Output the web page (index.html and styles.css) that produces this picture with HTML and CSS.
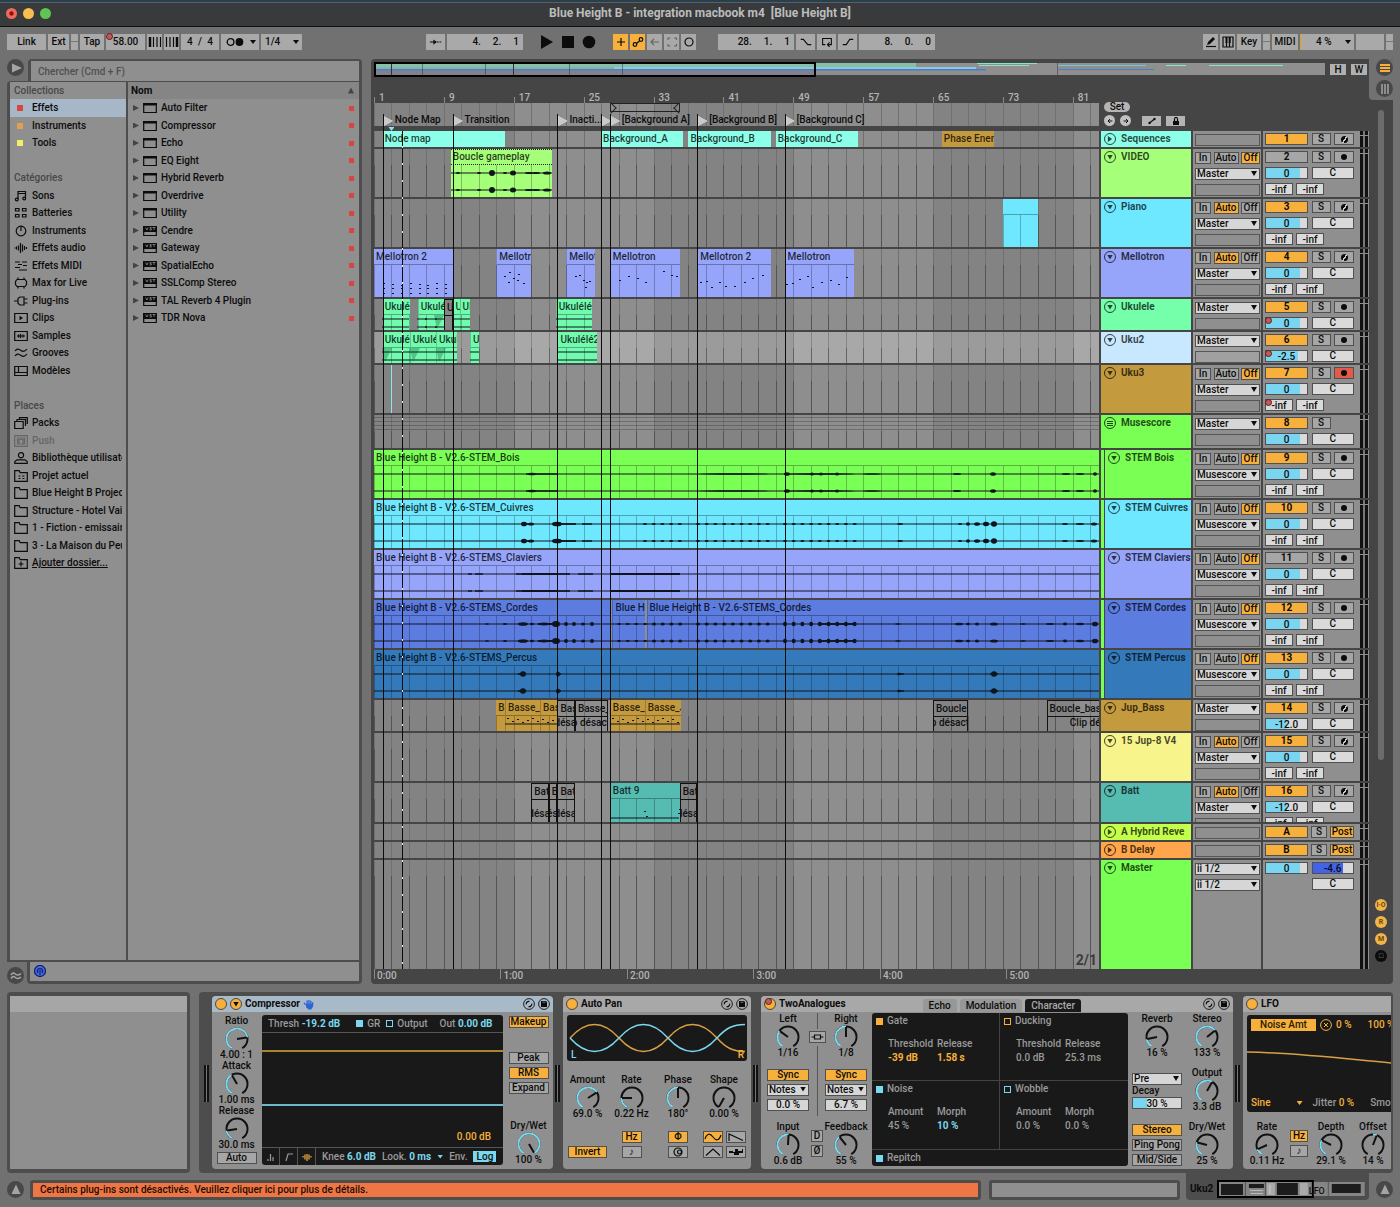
FILE: index.html
```html
<!DOCTYPE html>
<html lang="fr">
<head>
<meta charset="utf-8">
<title>Blue Height B - integration macbook m4</title>
<link rel="stylesheet" href="styles.css">
</head>
<body>
<svg class="defs" aria-hidden="true">
  <defs>
    <symbol id="i-notes" viewBox="0 0 14 12"><path d="M4 9V1.500h7.500V8M4 3.500h7.500"/><circle cx="2.800" cy="9.500" r="1.400"/><circle cx="10.200" cy="8.500" r="1.400"/></symbol>
    <symbol id="i-drums" viewBox="0 0 14 12"><path d="M1.500 1.500h3.500v2.500H1.500zM8.500 1.500H12v2.500H8.500zM1.500 7.500h3.500V10H1.500zM8.500 7.500H12V10H8.500z"/></symbol>
    <symbol id="i-dial" viewBox="0 0 14 12"><circle cx="7" cy="6" r="4.800"/><path d="M7 1v5"/></symbol>
    <symbol id="i-audio" viewBox="0 0 14 12"><path d="M.5 6h1M2.500 4.500v3M4.500 3.500v5M6.500 1v10M8.500 2.500v7M10.500 4v4M12.500 5v2"/></symbol>
    <symbol id="i-midi" viewBox="0 0 14 12"><path d="M1 2h5M8 2h5M4 4.500h4M1 7.500h5M5 10h8M9 5.500h4"/></symbol>
    <symbol id="i-max" viewBox="0 0 14 12"><path d="M3 2.500h8l1.500 2v3L11 9.500H3L1.500 7.500v-3zM4 .5v2M10 .5v2M4 9.500v2M10 9.500v2"/></symbol>
    <symbol id="i-plug" viewBox="0 0 14 12"><path d="M0 6h4M4 3.500 6 2h4v8H6L4 8.500zM10 4h3.500M10 8h3.500"/></symbol>
    <symbol id="i-clip" viewBox="0 0 14 12"><path d="M.7 1.500h12.600v9H.7z"/><path class="fill" d="M5.500 3.800 9 6 5.500 8.200z"/></symbol>
    <symbol id="i-sample" viewBox="0 0 14 12"><path d="M.7 1.500h12.600v9H.7zM3 6h8M4.500 4.500v3M6.500 4v4M9 4.500v3"/></symbol>
    <symbol id="i-groove" viewBox="0 0 14 12"><path d="M1 4c2-3 4-2 6-.5S11 4.500 13 2M1 9c2-3 4-2 6-.5S11 9.500 13 7"/></symbol>
    <symbol id="i-template" viewBox="0 0 14 12"><path d="M.7 1.500h12.600v9H.7zM.7 7.500h12.600M4.500 1.500v6"/></symbol>
    <symbol id="i-packs" viewBox="0 0 14 12"><path d="M.7 4.500h8.500v7H.7zM3 4V2.500h8.500V9M5.500 2V.600H13.300V7"/></symbol>
    <symbol id="i-push" viewBox="0 0 14 12"><path d="M.7.700h12.600v10.600H.7zM3.500 3h7v6h-7zM5 4.500h4V9H5z"/></symbol>
    <symbol id="i-user" viewBox="0 0 14 12"><circle cx="7" cy="3.200" r="2.600"/><path d="M.8 11.300V9.500L3 7.800h8l2.200 1.700v1.800z"/></symbol>
    <symbol id="i-folder" viewBox="0 0 14 12"><path d="M.7 11.300V.700h4.500l1 2h7.100v8.600z"/></symbol>
    <symbol id="i-project" viewBox="0 0 14 12"><path d="M.7 11.300V.700h4.500l1 2h7.100v8.600zM4.500 6h2M8 6h2.500M4.500 8.500h2M8.500 8.500h2"/></symbol>
    <symbol id="i-addfolder" viewBox="0 0 14 12"><path d="M.7 11.300V.700h4.500l1 2h7.100v8.600zM7 4.500v5M4.500 7h5"/></symbol>
    <symbol id="i-device" viewBox="0 0 14 12"><path d="M.7 1.500h12.600v9H.7z"/><path class="fill" d="M0 1h14v2.500H0z"/></symbol>
    <symbol id="i-vst" viewBox="0 0 14 12"><path d="M.7 1.500h12.600v9H.7z"/><path class="fill" d="M0 1h14v6H0z"/><path class="cut" d="M2.500 2.500 4 5l1-2.500M8.500 2.500H7v1.200h1.300V5H6.500M9.500 2.500h3M11 2.500V5"/></symbol>
    <symbol id="i-swap" viewBox="0 0 12 12"><circle class="disc" cx="6" cy="6" r="5.400"/><path d="M3.300 6.300C3 4.500 4.500 3 6.500 3.400M8.700 5.700C9 7.500 7.500 9 5.500 8.600"/></symbol>
    <symbol id="i-save" viewBox="0 0 12 12"><circle class="disc" cx="6" cy="6" r="5.400"/><path class="fill" d="M3 3h5l1 1v5H3z"/><path class="cut" d="M4.500 4.200h3"/></symbol>
    <symbol id="i-sine" viewBox="0 0 18 10"><path d="M1 7C3 1 6 1 9 5s6 4 8-2"/></symbol>
    <symbol id="i-saw" viewBox="0 0 18 10"><path d="M2 9V2l14 6.500"/></symbol>
    <symbol id="i-tri" viewBox="0 0 18 10"><path d="M2 8.500 9 2l7 6.500"/></symbol>
    <symbol id="i-rand" viewBox="0 0 18 10"><path class="fill" d="M2 4h4v1h2V2h3v2h4V2h1v4h-4v2H7V6H2z"/></symbol>
  </defs>
</svg>

<header class="titlebar">
  <div class="lights"><i class="light red"></i><i class="light yellow"></i><i class="light green"></i></div>
  <h1>Blue Height B - integration macbook m4 &nbsp;[Blue Height B]</h1>
</header>

<div class="toolbar">
  <div class="group">
    <button class="tb w40">Link</button>
    <button class="tb w22">Ext</button>
    <span class="tb led"></span>
    <button class="tb w24">Tap</button>
    <label class="tb w40 automated"><input aria-label="Tempo" value="58.00"></label>
    <button class="tb w16" aria-label="Ralentir"><svg viewBox="0 0 14 10"><path class="heavy" d="M2 0v10"/><path d="M5.500 0v10M9 0v10M12.500 0v10"/></svg></button>
    <button class="tb w16" aria-label="Accélérer"><svg viewBox="0 0 14 10"><path d="M1.500 0v10M5 0v10M8.500 0v10"/><path class="heavy" d="M12 0v10"/></svg></button>
    <button class="tb w38 spread"><span>4</span><span>/</span><span>4</span></button>
    <button class="tb w38 drop" aria-label="Métronome"><svg class="metro" viewBox="0 0 18 10"><circle cx="5" cy="5" r="3"/><circle class="fill" cx="13" cy="5" r="3.500"/></svg></button>
    <button class="tb w42 drop">1/4</button>
  </div>
  <div class="group center">
    <button class="tb w20" aria-label="Suivre"><svg viewBox="0 0 16 10"><path d="M1 5h5M9 5h2M12 5h2"/><path class="fill" d="M5 2l4 3-4 3z"/></svg></button>
    <button class="tb w76 position"><span>4.</span><span>2.</span><span>1</span></button>
    <span class="transport">
      <button aria-label="Lecture"><svg viewBox="0 0 14 14"><path class="fill" d="M1 0l12 7-12 7z"/></svg></button>
      <button aria-label="Stop"><svg viewBox="0 0 14 14"><path class="fill" d="M1 1h12v12H1z"/></svg></button>
      <button aria-label="Enregistrer"><svg viewBox="0 0 14 14"><circle class="fill" cx="7" cy="7" r="6.300"/></svg></button>
    </span>
    <button class="tb w16 on" aria-label="Overdub"><svg viewBox="0 0 14 12"><path d="M7 2v8M3 6h8"/></svg></button>
    <button class="tb w16 on" aria-label="Automation"><svg viewBox="0 0 14 12"><circle cx="4" cy="8.500" r="1.800"/><circle cx="10" cy="3.500" r="1.800"/><path d="M5.500 7.500 8.500 5"/></svg></button>
    <button class="tb w16 dim" aria-label="Réactiver l'automation"><svg viewBox="0 0 14 12"><path d="M3 6h8M6 3 3 6l3 3"/></svg></button>
    <button class="tb w16 dim" aria-label="Capture"><svg viewBox="0 0 14 12"><path d="M3 4V2h2.500M9 2h2.500v2M3 8v2h2.500M9 10h2.500V8"/></svg></button>
    <button class="tb w16" aria-label="Session"><svg viewBox="0 0 14 12"><circle cx="7" cy="6" r="4"/></svg></button>
    <button class="tb w76 position after"><span>28.</span><span>1.</span><span>1</span></button>
    <button class="tb w20" aria-label="Punch in"><svg viewBox="0 0 16 10"><path d="M2 2h3l5 6h4"/></svg></button>
    <button class="tb w20" aria-label="Boucle"><svg viewBox="0 0 16 12"><path d="M6 9H3V2h10v7H9M11 6.500 8.500 9l2.500 2.500"/></svg></button>
    <button class="tb w20" aria-label="Punch out"><svg viewBox="0 0 16 10"><path d="M2 8h4l4-6h4"/></svg></button>
    <button class="tb w76 position"><span>8.</span><span>0.</span><span>0</span></button>
  </div>
  <div class="group end-group">
    <button class="tb w16" aria-label="Dessin"><svg viewBox="0 0 14 12"><path d="M2 10.500h10"/><path class="fill" d="M3 9l1-3 5-5 2 2-5 5z"/></svg></button>
    <button class="tb w16" aria-label="Clavier MIDI"><svg viewBox="0 0 14 12"><path d="M2 1h10v10H2zM5.500 6v5M8.500 6v5"/><path class="fill" d="M4.500 1h2v6h-2zM7.700 1h2v6h-2z"/></svg></button>
    <button class="tb w24">Key</button>
    <span class="tb led"></span>
    <button class="tb w26">MIDI</button>
    <button class="tb w54 drop cpu">4 %</button>
    <span class="tb w28"></span>
    <span class="tb led"></span>
  </div>
</div>

<main class="workspace">
  <section class="browser">
    <div class="b-top">
      <button class="round" aria-label="Pré-écoute"><svg viewBox="0 0 16 16"><path d="M4 3.500l10 4.500-10 4.500z"/></svg></button>
      <div class="b-search"><input type="search" aria-label="Chercher" placeholder="Chercher (Cmd + F)"></div>
    </div>
    <div class="b-body">
      <nav>
        <ul class="rows side">
          <li class="head">Collections</li>
          <li class="current"><i class="tag t-red"></i>Effets</li>
          <li><i class="tag t-orange"></i>Instruments</li>
          <li><i class="tag t-yellow"></i>Tools</li>
          <li></li>
          <li class="head">Catégories</li>
          <li><svg><use href="#i-notes"/></svg>Sons</li>
          <li><svg><use href="#i-drums"/></svg>Batteries</li>
          <li><svg><use href="#i-dial"/></svg>Instruments</li>
          <li><svg><use href="#i-audio"/></svg>Effets audio</li>
          <li><svg><use href="#i-midi"/></svg>Effets MIDI</li>
          <li><svg><use href="#i-max"/></svg>Max for Live</li>
          <li><svg><use href="#i-plug"/></svg>Plug-ins</li>
          <li><svg><use href="#i-clip"/></svg>Clips</li>
          <li><svg><use href="#i-sample"/></svg>Samples</li>
          <li><svg><use href="#i-groove"/></svg>Grooves</li>
          <li><svg><use href="#i-template"/></svg>Modèles</li>
          <li></li>
          <li class="head">Places</li>
          <li><svg><use href="#i-packs"/></svg>Packs</li>
          <li class="off"><svg><use href="#i-push"/></svg>Push</li>
          <li><svg><use href="#i-user"/></svg><span>Bibliothèque utilisateur</span></li>
          <li><svg><use href="#i-project"/></svg>Projet actuel</li>
          <li><svg><use href="#i-folder"/></svg><span>Blue Height B Project</span></li>
          <li><svg><use href="#i-folder"/></svg><span>Structure - Hotel Vai</span></li>
          <li><svg><use href="#i-folder"/></svg><span>1 - Fiction - emissaire</span></li>
          <li><svg><use href="#i-folder"/></svg><span>3 - La Maison du Peup</span></li>
          <li><svg><use href="#i-addfolder"/></svg><a href="#">Ajouter dossier...</a></li>
        </ul>
      </nav>
      <ul class="rows files">
        <li class="colhead">Nom<i></i></li>
        <li><svg><use href="#i-device"/></svg>Auto Filter</li>
        <li><svg><use href="#i-device"/></svg>Compressor</li>
        <li><svg><use href="#i-device"/></svg>Echo</li>
        <li><svg><use href="#i-device"/></svg>EQ Eight</li>
        <li><svg><use href="#i-device"/></svg>Hybrid Reverb</li>
        <li><svg><use href="#i-device"/></svg>Overdrive</li>
        <li><svg><use href="#i-device"/></svg>Utility</li>
        <li><svg><use href="#i-vst"/></svg>Cendre</li>
        <li><svg><use href="#i-vst"/></svg>Gateway</li>
        <li><svg><use href="#i-vst"/></svg>SpatialEcho</li>
        <li><svg><use href="#i-vst"/></svg>SSLComp Stereo</li>
        <li><svg><use href="#i-vst"/></svg>TAL Reverb 4 Plugin</li>
        <li><svg><use href="#i-vst"/></svg>TDR Nova</li>
      </ul>
    </div>
    <div class="b-bottom">
      <button class="round" aria-label="Groove Pool"><svg viewBox="0 0 16 16"><path class="line" d="M3 7c2-3 3-2 5-.5S11 7 13 5.500M3 10.500c2-3 3-2 5-.5s3 .5 5-1"/></svg></button>
      <div class="b-foot"><div><button class="phones" aria-label="Casque"><svg viewBox="0 0 12 12"><circle cx="6" cy="6" r="5.500"/><path d="M3.500 8V6a2.500 2.500 0 0 1 5 0v2M6 5v5"/></svg></button></div></div>
    </div>
  </section>

  <section class="arrangement">
    <div class="arr-main">
      <div class="overview">
        <div class="mini">
          <svg viewBox="0 0 951 12" preserveAspectRatio="none">
            <path fill="#86c0a8" d="M2 0h540v5H2z"/><path fill="#87b3a8" d="M2 4h600v3H2z"/><path fill="#8fc8d8" d="M240 4h362v2H240z"/>
            <path fill="#4a7fc8" d="M2 6h610v1.500H2z"/><path fill="#84808e" d="M2 8h440v4H2z"/>
            <path fill="#83e6c4" d="M603 0h60v1h-60zM605 2h50v1h-50zM835 2h74v1h-74zM792 2h20v1h-20z"/>
            <path fill="#70c8d8" d="M684 2h88v1h-88z"/><path fill="#4a7fc8" d="M684 6h96v1h-96z"/>
            <path fill="#333" d="M17 0h1v12h-1zM48 0h.5v12H48zM111 0h.5v12h-.5zM139 0h1v12h-1zM195 0h.5v12h-.5zM248 0h.5v12h-.5zM683 0h.5v12h-.5z"/>
          </svg>
          <i class="window"></i>
        </div>
        <button>H</button><button>W</button>
      </div>
      <div class="ruler" id="ruler"></div>
      <div class="arr-body">
        <div class="markers">
          <div class="scrub lane-bg" id="locators"><i class="loop"></i></div>
          <div class="set">
            <button class="pill">Set</button>
            <span class="nav-row">
              <button class="dot-btn" aria-label="Précédent"><svg viewBox="0 0 10 10"><path d="M8 5H3M5 2.500 2.500 5 5 7.500"/></svg></button>
              <button class="dot-btn" aria-label="Suivant"><svg viewBox="0 0 10 10"><path d="M2 5h5M5 2.500 7.500 5 5 7.500"/></svg></button>
              <button class="flat" aria-label="Mode automation"><svg viewBox="0 0 10 8"><path d="M2.500 6l5-4"/><circle class="fill" cx="2.500" cy="6" r="1.200"/><circle class="fill" cx="7.500" cy="2" r="1.200"/></svg></button>
              <button class="flat" aria-label="Verrouiller les enveloppes"><svg viewBox="0 0 10 8"><path class="fill" d="M2 4h6v4H2z"/><path d="M3.500 4V2a1.500 1.500 0 0 1 3 0v2"/></svg></button>
            </span>
          </div>
        </div>
        <div class="tracks" id="tracks"></div>
        <div class="overlay" id="overlay"></div>
      </div>
      <div class="times" id="times"></div>
    </div>
    <aside class="arr-side">
      <div class="views">
        <button class="round" aria-label="Arrangement"><svg viewBox="0 0 16 16"><path class="amber" d="M3 5h10M3 8h10M3 11h10"/></svg></button>
        <button class="round" aria-label="Session"><svg viewBox="0 0 16 16"><path class="line" d="M5 3v10M8 3v10M11 3v10"/></svg></button>
      </div>
      <i class="scrollbar"></i>
      <div class="toggles"><button>I·O</button><button>R</button><button>M</button><button class="black">□</button></div>
    </aside>
  </section>
</main>

<section class="detail">
  <div class="info"><div></div></div>
  <div class="devices">
    <i class="vu"></i>
    <article class="device compressor">
      <header><i class="power"></i><i class="power fold-arrow"></i><h2>Compressor</h2><svg class="hand" viewBox="0 0 12 12"><path d="M3 6 1 4.500M4.500 6V1.500M6.500 6V1M8.500 6V2M10.500 7V3.500"/><path class="body" d="M3 5.500h8V8l-2 3.500H6L3.500 9z"/></svg><span class="tools"><svg><use href="#i-swap"/></svg><svg><use href="#i-save"/></svg></span></header>
      <div class="body">
        <div class="col">
          <div class="knob" data-v="0.77" data-name="Ratio">4.00 : 1</div>
          <div class="knob" data-v="0.4" data-name="Attack">1.00 ms</div>
          <div class="knob" data-v="0.17" data-name="Release">30.0 ms</div>
          <button class="btn push-down">Auto</button>
        </div>
        <div class="screen comp-screen">
          <div class="line-row"><span>Thresh <b>-19.2 dB</b></span><label><input type="checkbox" checked>GR</label><label><input type="checkbox">Output</label><span>Out <b>0.00 dB</b></span></div>
          <div class="graph"><i class="orange-line"></i><i class="cyan-line"></i><span>0.00 dB</span></div>
          <div class="foot-row">
            <button aria-label="Activité"><svg viewBox="0 0 12 12"><path d="M3 10V8M5.500 10V3M8 10V6"/></svg></button>
            <button aria-label="Transfert"><svg viewBox="0 0 12 12"><path d="M3 10 5 3h5"/></svg></button>
            <button aria-label="Réduction" class="amber"><svg viewBox="0 0 12 12"><path d="M2 5v1.500M4 3.500v5M6 3v7M8 3.500v5M10 5v1.500"/></svg></button>
            <span>Knee <b>6.0 dB</b></span><span>Look. <b>0 ms</b></span><i class="tri"></i><span>Env.</span><button class="log">Log</button>
          </div>
        </div>
        <div class="col right">
          <button class="btn on">Makeup</button>
          <div class="stack"><button class="btn">Peak</button><button class="btn on">RMS</button><button class="btn">Expand</button></div>
          <div class="knob" data-v="1" data-name="Dry/Wet">100 %</div>
        </div>
      </div>
    </article>
    <i class="vu"></i>
    <article class="device autopan">
      <header><i class="power"></i><h2>Auto Pan</h2><span class="tools"><svg><use href="#i-swap"/></svg><svg><use href="#i-save"/></svg></span></header>
      <div class="body">
        <div class="screen pan-screen">
          <svg viewBox="0 0 180 46" preserveAspectRatio="none"><path class="o" d="M3 23C12 13 19 9.500 27.500 9.500S43 13 52 23C61 33 68 36.500 76.500 36.500S92 33 101 23C110 13 117 9.500 125.500 9.500S141 13 150 23C159 33 166 36.500 178 36.500"/><path class="c" d="M3 23C12 33 19 36.500 27.500 36.500S43 33 52 23C61 13 68 9.500 76.500 9.500S92 13 101 23C110 33 117 36.500 125.500 36.500S141 33 150 23C159 13 166 9.500 178 9.500"/></svg>
          <span>L</span><span>R</span>
        </div>
        <div class="four">
          <div class="knob" data-v="0.69" data-name="Amount">69.0 %</div>
          <div class="knob" data-v="0.2" data-name="Rate">0.22 Hz</div>
          <div class="knob" data-v="0.5" data-name="Phase">180°</div>
          <div class="knob" data-v="0" data-name="Shape">0.00 %</div>
        </div>
        <div class="four modes">
          <div class="stack end"><button class="btn on wide">Invert</button></div>
          <div class="stack"><button class="btn on sm">Hz</button><button class="btn sm">♪</button></div>
          <div class="stack"><button class="btn on sm">Φ</button><button class="btn sm" aria-label="Spin"><svg viewBox="0 0 18 10"><circle cx="9" cy="5" r="4"/><circle cx="10.500" cy="5" r="2"/></svg></button></div>
          <div class="waves"><button class="btn on" aria-label="Sinus"><svg><use href="#i-sine"/></svg></button><button class="btn" aria-label="Dent de scie"><svg><use href="#i-saw"/></svg></button><button class="btn" aria-label="Triangle"><svg><use href="#i-tri"/></svg></button><button class="btn" aria-label="Aléatoire"><svg><use href="#i-rand"/></svg></button></div>
        </div>
      </div>
    </article>
    <i class="vu"></i>
    <article class="device echo">
      <header><i class="power automated"></i><h2>TwoAnalogues</h2><div class="tabs"><button>Echo</button><button>Modulation</button><button class="active">Character</button></div><span class="tools"><svg><use href="#i-swap"/></svg><svg><use href="#i-save"/></svg></span></header>
      <div class="body">
        <div class="delay">
          <div class="side-col">
            <div class="knob" data-v="0.32" data-name="Left">1/16</div>
            <div class="stack"><button class="btn on">Sync</button><label class="sel"><select aria-label="Mode gauche"><option>Notes</option></select></label><input class="val" aria-label="Décalage gauche" value="0.0 %"></div>
            <div class="knob" data-v="0.51" data-name="Input">0.6 dB</div>
          </div>
          <div class="mid-col"><i class="rule"></i><button class="btn" aria-label="Lier"><svg viewBox="0 0 14 10"><path d="M1 5h3M10 5h3M4 3h6v4H4z"/></svg></button><i class="rule long"></i><button class="btn">D</button><button class="btn">Ø</button></div>
          <div class="side-col">
            <div class="knob" data-v="0.5" data-name="Right">1/8</div>
            <div class="stack"><button class="btn on">Sync</button><label class="sel"><select aria-label="Mode droite"><option>Notes</option></select></label><input class="val" aria-label="Décalage droite" value="6.7 %"></div>
            <div class="knob" data-v="0.37" data-name="Feedback">55 %</div>
          </div>
        </div>
        <div class="screen char-screen">
          <section><label class="o"><input type="checkbox" checked>Gate</label><dl class="o"><dt>Threshold</dt><dt>Release</dt><dd class="hi">-39 dB</dd><dd class="hi">1.58 s</dd></dl></section>
          <section><label class="o"><input type="checkbox">Ducking</label><dl><dt>Threshold</dt><dt>Release</dt><dd>0.0 dB</dd><dd>25.3 ms</dd></dl></section>
          <section><label><input type="checkbox" checked>Noise</label><dl><dt>Amount</dt><dt>Morph</dt><dd>45 %</dd><dd class="hi">10 %</dd></dl></section>
          <section><label><input type="checkbox">Wobble</label><dl><dt>Amount</dt><dt>Morph</dt><dd>0.0 %</dd><dd>0.0 %</dd></dl></section>
          <section class="last"><label><input type="checkbox" checked>Repitch</label></section>
        </div>
        <div class="out-a">
          <div class="knob" data-v="0.16" data-name="Reverb">16 %</div>
          <div class="decay"><label class="sel"><select aria-label="Position de la réverb"><option>Pre</option></select></label><label for="decay">Decay</label><input id="decay" class="val fill30" value="30 %"></div>
          <div class="stack"><button class="btn on">Stereo</button><button class="btn">Ping Pong</button><button class="btn">Mid/Side</button></div>
        </div>
        <div class="out-b">
          <div class="knob" data-v="0.67" data-name="Stereo">133 %</div>
          <div class="knob" data-v="0.6" data-name="Output">3.3 dB</div>
          <div class="knob" data-v="0.25" data-name="Dry/Wet">25 %</div>
        </div>
      </div>
    </article>
    <i class="vu"></i>
    <article class="device lfo">
      <header><i class="power"></i><h2>LFO</h2></header>
      <div class="body">
        <div class="screen lfo-screen">
          <div class="lfo-top"><button>Noise Amt</button><svg viewBox="0 0 12 12"><circle cx="6" cy="6" r="5.400"/><path d="M4 4l4 4M8 4 4 8"/></svg><b>0 %</b><b class="far">100 %</b></div>
          <svg class="curve" viewBox="0 0 144 52" preserveAspectRatio="none"><path d="M0 13C50 14 90 19 144 24"/></svg>
          <div class="lfo-bottom"><b>Sine</b><i class="tri"></i><span>Jitter <b>0 %</b></span><span>Smooth</span></div>
        </div>
        <div class="lfo-knobs">
          <div class="knob" data-v="0.12" data-name="Rate">0.11 Hz</div>
          <div class="stack"><button class="btn on">Hz</button><button class="btn">♪</button></div>
          <div class="knob" data-v="0.29" data-name="Depth">29.1 %</div>
          <div class="knob" data-v="0.57" data-bipolar data-name="Offset">14 %</div>
        </div>
      </div>
    </article>
  </div>
</section>

<footer class="status">
  <button class="round" aria-label="Vue info"><svg viewBox="0 0 16 16"><path d="M8 2.500 12.500 12h-9z"/></svg></button>
  <button class="message">Certains plug-ins sont désactivés. Veuillez cliquer ici pour plus de détails.</button>
  <div class="field"></div>
  <div class="chain"><strong>Uku2</strong>
    <svg viewBox="0 0 150 18" preserveAspectRatio="none">
      <path fill="#858585" d="M1 2h147v14H1z"/>
      <path fill="#1c1c1c" d="M4 4h22v11H4zM32 4h15v4H32zM60 3h21v12H60zM115 4h29v9h-29z"/>
      <path fill="#aaa" d="M50 3h8v12h-8zM83 3h8v12h-8z"/><path fill="#bbb" d="M33 10h13v1H33zM34 13h12v1H34zM52 5h2v9h-2z"/><path fill="#555" d="M28 2h1v14h-1zM48 2h1v14h-1zM111 2h1v14h-1z"/>
      <path fill="none" stroke="#000" stroke-width="2" d="M1 1h95v16H1z"/>
      <text x="92" y="14">LFO</text>
    </svg>
  </div>
  <button class="round" aria-label="Vue détail"><svg viewBox="0 0 16 16"><path d="M8 2.500 12.500 12h-9z"/></svg></button>
</footer>
<script src="app.js"></script>
</body>
</html>
```
FILE: styles.css
```css
:root {
  --frame: #4d4d4d;
  --desk: #717171;
  --panel: #8f8f8f;
  --amber: #f7b03c;
  --cyan: #7bd8ee;
  --control: #a9a9a9;
  --screen: #191919;
  --bar: calc(100% / 83);
}
* { box-sizing: border-box; }
html, body { margin: 0; padding: 0; }
body {
  min-height: 100vh;
  display: flex;
  flex-direction: column;
  background: var(--desk);
  color: #0c0c0c;
  font: 500 10px/12px Roboto, "Liberation Sans", sans-serif;
  overflow-x: hidden;
}
button, input, select { font: inherit; color: inherit; margin: 0; padding: 0; border: 0; border-radius: 0; background: none; outline: 0; appearance: none; text-align: center; }
ul, dl, dd { margin: 0; padding: 0; list-style: none; }
h1, h2 { margin: 0; font-size: inherit; }
svg { fill: none; stroke: currentColor; stroke-width: 1.2; flex: none; }
.fill { fill: currentColor; stroke: none; }
.cut { stroke: #8f8f8f; stroke-width: .8; }
.defs { position: absolute; width: 0; height: 0; }

/* title bar */
.titlebar { height: 27px; background: #393a3b; border-top: 2px solid #29404c; border-bottom: 1px solid #111; box-shadow: inset 0 1px #55606a; position: relative; text-align: center; }
.titlebar h1 { font-size: 12px; line-height: 23px; color: #bcbcbc; }
.lights { position: absolute; left: 6px; top: 6px; display: flex; gap: 6px; }
.light { width: 11px; height: 11px; border-radius: 50%; }
.light.red { background: radial-gradient(#8c1008 20%, #ee6a5f 35%); }
.light.yellow { background: #f5be4f; }
.light.green { background: #5fc454; }

/* toolbar */
.toolbar { display: flex; padding: 7px 7px 9px; }
.group { display: flex; gap: 2px; }
.group.center { margin-left: 124px; }
.end-group { margin-left: auto; }
.tb { height: 16px; flex: none; background: var(--control); position: relative; display: flex; align-items: center; justify-content: center; }
.tb svg { height: 12px; width: 14px; }
.tb svg.metro { width: 20px; }
.tb input { width: 100%; }
.tb.on { background: var(--amber); }
.tb.dim { color: #666; }
.heavy { stroke-width: 2.500; }
.w16 { width: 15px; } .w20 { width: 19px; } .w22 { width: 21px; } .w24 { width: 24px; } .w26 { width: 26px; } .w28 { width: 28px; }
.w38 { width: 38px; } .w40 { width: 39px; } .w42 { width: 41px; } .w54 { width: 54px; } .w76 { width: 76px; }
.led { width: 7px; background: linear-gradient(var(--control) 7px, #777 7px 8px, var(--control) 8px); }
.drop { justify-content: flex-start; padding-left: 4px; }
.drop::after, .tri { content: ""; width: 6px; height: 4px; background: currentColor; clip-path: polygon(0 0, 100% 0, 50% 100%); }
.drop::after { position: absolute; right: 3px; top: 6px; }
.cpu { padding-left: 14px; border-left: 2px solid #c8a75a; }
.spread { justify-content: space-between; padding: 0 6px; }
.position { justify-content: flex-end; gap: 12px; padding-right: 4px; }
.position.after { margin-left: 20px; }
.transport { display: flex; gap: 7px; padding: 1px 15px; }
.transport svg { width: 14px; height: 14px; display: block; }
.automated { position: relative; }
.automated::before { content: ""; position: absolute; z-index: 1; left: 0; top: -1px; width: 5px; height: 5px; border: 1px solid #5c1d1d; border-radius: 50%; background: #c4595a; }

/* browser */
.workspace { flex: 1; display: grid; grid-template-columns: 355px minmax(0, 1fr); gap: 9px; padding: 0 7px; }
.browser { display: flex; flex-direction: column; }
.round { width: 17px; height: 17px; flex: none; border-radius: 50%; background: #484848; color: #a4a4a4; display: grid; place-items: center; }
.round svg { width: 16px; height: 16px; fill: currentColor; stroke: none; }
.round .line, .round .amber { fill: none; stroke: currentColor; stroke-width: 1.500; }
.round .amber { stroke: var(--amber); stroke-width: 2; }
.b-top { display: flex; gap: 4px; }
.b-search { flex: 1; background: var(--frame); padding: 2px 3px 0; border-radius: 4px 4px 0 0; }
.b-search input { display: block; width: 100%; height: 20px; background: var(--panel); text-align: left; padding-left: 7px; }
.b-search input::placeholder { color: #505050; opacity: 1; }
.b-body { flex: 1; background: var(--frame); padding: 1px 3px 2px; border-radius: 4px 0 0 0; display: grid; grid-template-columns: 116px minmax(0, 1fr); gap: 2px; }
.b-body > * { background: var(--panel); min-width: 0; }
.rows li { height: 17px; display: flex; align-items: center; white-space: nowrap; overflow: hidden; }
.rows li:nth-child(even) { height: 18px; }
.rows svg { width: 14px; height: 12px; margin: 0 4px; }
.side { padding-right: 4px; }
.side .current { background: #a6b7c7; margin-right: -4px; }
.side .head { padding-left: 4px; color: #484848; }
.side .off { color: #666; }
.tag { width: 6px; height: 6px; margin: 0 9px 0 7px; }
.t-red { background: #d8453f; } .t-orange { background: #e2a04c; } .t-yellow { background: #f2ee68; }
.rows a { color: inherit; }
.files li { position: relative; }
.files li::before { content: ""; width: 6px; height: 6px; margin-left: 5px; background: #444; clip-path: polygon(0 0, 100% 50%, 0 100%); }
.files li::after { content: ""; position: absolute; right: 5px; width: 5px; height: 5px; background: #d8453f; }
.files .colhead { background: #858585; padding: 0 5px 0 3px; font-weight: 700; justify-content: space-between; }
.files .colhead::before, .files .colhead::after { display: none; }
.colhead i { width: 6px; height: 6px; background: #444; clip-path: polygon(50% 0, 100% 100%, 0 100%); }
.b-bottom { display: flex; justify-content: space-between; align-items: flex-end; }
.b-foot { width: 335px; background: var(--frame); padding: 0 3px 3px; border-radius: 0 0 4px 4px; }
.b-foot > div { background: var(--panel); height: 19px; padding: 3px 4px; }
.phones { display: block; color: #10206a; }
.phones svg { width: 12px; height: 12px; display: block; fill: #4468e0; }

/* arrangement frame */
.arrangement { display: grid; grid-template-columns: minmax(0, 1fr) 24px; background: #454545; border-radius: 4px; overflow: hidden; }
.arr-main { padding-left: 3px; min-width: 0; }
.overview { display: flex; gap: 5px; padding-top: 2px; height: 19px; align-items: center; padding-right: 2px; }
.overview button { background: #b0b0b0; width: 16px; height: 11px; line-height: 11px; }
.mini { flex: 1; height: 15px; position: relative; padding: 1px 0 2px; }
.mini > svg { width: 100%; height: 12px; display: block; background: var(--panel); stroke: none; }
.window { position: absolute; left: 0; top: 0; width: 46.5%; height: 15px; border: 2px solid #000; }
.ruler { height: 25px; margin-right: 270px; position: relative; color: #b4b4b4; }
.ruler span { position: absolute; bottom: 0; height: 6px; border-left: 1px solid #888; }
.ruler b { font-weight: 500; position: absolute; left: 4px; bottom: -1px; }
.arr-body { position: relative; }
.markers, .track { display: grid; grid-template-columns: minmax(0, 1fr) 90px 68px 106px; column-gap: 2px; }
.markers { height: 28px; }
.lane-bg { background:
  repeating-linear-gradient(90deg, #707070 0 1px, transparent 1px calc(var(--bar) * 2)),
  repeating-linear-gradient(90deg, #838383 0 calc(var(--bar) * 16), #8e8e8e calc(var(--bar) * 16) calc(var(--bar) * 32)); }
.scrub { height: 23px; position: relative; }
.loop { position: absolute; left: 32.500%; width: 9.640%; top: 0; height: 9px; border: 1px solid #222; }
.loop::before, .loop::after { content: ""; position: absolute; top: 0; width: 7px; height: 7px; border: solid #222; border-width: 1px 1px 0 0; }
.loop::before { left: -4px; transform: rotate(45deg); }
.loop::after { right: -4px; transform: rotate(225deg); }
.locator { position: absolute; left: 0; top: 11px; height: 12px; display: flex; gap: 1px; overflow: hidden; white-space: nowrap; }
.locator::before { content: ""; flex: none; width: 9px; height: 10px; margin-top: 1px; background: linear-gradient(#c9c9c9, #c9c9c9) content-box #222; padding: 1px; clip-path: polygon(0 0, 100% 50%, 0 100%); }
.set { grid-column: 2 / 5; padding: 0 3px; display: grid; align-content: start; gap: 3px; margin-top: -1px; }
.pill { width: 26px; height: 10px; line-height: 10px; border-radius: 5px; background: #b4b4b4; }
.nav-row { display: flex; gap: 5px; align-items: center; height: 11px; }
.nav-row svg { width: 10px; height: 8px; display: block; margin: auto; }
.dot-btn { width: 11px; height: 11px; border-radius: 50%; background: #c0c0c0; }
.flat { width: 19px; height: 10px; background: #b4b4b4; }
.flat { margin-left: 6px; } .flat + .flat { margin-left: 0; }

/* tracks */
.tracks { display: grid; row-gap: 2px; }
.mini-row { height: 16px; } .short { height: 31px; } .group-row { height: 33px; } .tall { height: 48px; } .cropped { height: 39px; } .master { height: 109px; }
.track > * { overflow: hidden; }
.lane { position: relative; }
.lane::after { content: ""; position: absolute; inset: 16px 0 0; pointer-events: none; background: repeating-linear-gradient(90deg, rgba(0,0,0,.25) 0 1px, transparent 1px calc(var(--bar) * 2)); }
.selected .lane { background:
  repeating-linear-gradient(90deg, #858585 0 1px, transparent 1px calc(var(--bar) * 2)),
  repeating-linear-gradient(90deg, #9b9b9b 0 calc(var(--bar) * 16), #a8a8a8 calc(var(--bar) * 16) calc(var(--bar) * 32)); }
.summary::before { content: ""; position: absolute; inset: 2px 0 auto; height: 15px; background: repeating-linear-gradient(rgba(0,0,0,.22) 0 1px, transparent 1px 4px); }
.clip { position: absolute; top: 0; bottom: 0; overflow: hidden; background: var(--c); color: rgba(0,0,0,.78); white-space: nowrap; }
.clip span { display: block; height: 16px; line-height: 16px; padding-left: 2px; border-bottom: 1px solid rgba(0,0,0,.3); }
.clip + .clip:not(.off) { border-left: 1px solid rgba(0,0,0,.2); padding-left: 0; }
.mini-row .clip + .clip { border-left: 0; }
.mini-row .clip span { border: 0; }
.clip.dotted span { border-top: 1px dotted #222; border-bottom: 1px dotted #222; line-height: 14px; }
.clip.off { background: none; border: 1px solid #111; border-bottom: 0; color: #111; }
.clip.off span { border-color: #111; }
.clip.off em { position: absolute; left: 50%; bottom: 2px; transform: translateX(-50%); font-style: normal; }
.clip.plain { background: #858585; }
.wave { position: absolute; left: 0; top: 16px; width: 100%; height: 33px; fill: #10151c; stroke: none; }
.insert { position: absolute; left: calc(var(--bar) * 2); top: 0; bottom: 0; width: 1px; background: #8fe4f4; z-index: 1; }
.overlay { position: absolute; left: 0; right: 270px; top: 11px; bottom: 0; pointer-events: none; }
.overlay i { position: absolute; top: 0; bottom: 0; width: 1px; background: #0c0c0c; }
.overlay .playhead { top: 17px; background: repeating-linear-gradient(#0c0c0c 0 15px, #e8e8e8 15px 17px); }
.overlay .caret { top: 13px; bottom: auto; height: 4px; width: 6px; margin-left: -3px; background: #8fe4f4; clip-path: polygon(0 0, 100% 0, 50% 100%); }
.overlay strong { position: absolute; right: 2px; bottom: 0; font-size: 14px; line-height: 18px; color: #3c3c3c; }
.name { background: var(--c); display: flex; gap: 5px; align-items: flex-start; padding: 2px 0 0 3px; font-weight: 700; color: rgba(0,0,0,.72); white-space: nowrap; }
.grouped .name { border-left: 3px solid #7aff54; box-shadow: inset 1px 0 #454545; padding-left: 4px; }
.fold { flex: none; width: 12px; height: 12px; border: 1px solid currentColor; border-radius: 50%; display: grid; place-items: center; }
.fold::after, .fold-arrow::after { content: ""; width: 6px; height: 5px; background: currentColor; clip-path: polygon(0 0, 100% 0, 50% 100%); }
.fold.closed::after { clip-path: polygon(15% 0, 85% 50%, 15% 100%); height: 6px; }
.fold.group-icon::after { clip-path: none; background: repeating-linear-gradient(currentColor 0 1px, transparent 1px 2px); height: 5px; }
.io { background: var(--panel); padding: 3px 1px 0 2px; display: flex; flex-direction: column; gap: 4px; }
.selected .io { background: #a0a0a0; }
.io > * { flex: none; height: 12px; }
.monitor { display: flex; justify-content: space-between; }
.monitor button { width: 16px; } .monitor button:nth-child(2) { width: 25px; } .monitor button:nth-child(3) { width: 19px; }
.blank { border: 1px solid #555; }
.btn, .monitor button, .strip button { height: 12px; line-height: 10px; border: 1px solid #505050; background: #a6a6a6; }
.sel { position: relative; display: block; height: 12px; border: 1px solid #505050; background: #d6d6d6; }
.sel select { display: block; width: 100%; height: 10px; line-height: 10px; padding-left: 1px; text-align: left; }
.sel::after { content: ""; position: absolute; right: 2px; top: 2px; width: 6px; height: 5px; background: #0c0c0c; clip-path: polygon(0 0, 100% 0, 50% 100%); pointer-events: none; }
.strip { background: var(--panel); padding: 2px 15px 0 2px; display: grid; grid-template-columns: 43px 19px 20px; grid-auto-rows: 12px; gap: 4px 3px; position: relative; align-content: start; justify-content: space-between; }
.strip.return { grid-template-columns: 43px 16px 24px; }
.strip .num { font-weight: 700; }
.strip .vol { display: block; border: 1px solid #505050; background: linear-gradient(90deg, var(--fill-color, #7ad5f0) var(--fill), #dadada var(--fill)); width: 100%; height: 12px; line-height: 10px; }
.holder { position: relative; display: block; }
.holder::before { left: 0; top: 0; }
.strip .pan, .cue { grid-column: span 2; }
.strip .pan { background: #dadada; }
.sends { grid-column: 1 / 4; display: flex; gap: 3px; }
.sends .holder { width: 28px; }
.strip .on, .monitor .on, .btn.on { background: var(--amber) !important; }
.strip .armed { background: #e25a48; }
.strip i.disc { display: block; margin: auto; width: 6px; height: 6px; border-radius: 50%; background: #0c0c0c; }
.strip i.disc.midi { background: linear-gradient(120deg, #0c0c0c 45%, #ccc 45% 60%, #0c0c0c 60%); width: 7px; height: 7px; }
.meter { position: absolute; right: 1px; top: 0; bottom: 0; width: 8px; background: linear-gradient(transparent 4px, var(--panel) 4px 5px, transparent 5px), linear-gradient(90deg, #111 3px, #777 3px 5px, #111 5px); }
.times { height: 15px; margin-right: 270px; position: relative; color: #b4b4b4; }
.times span { position: absolute; top: 0; height: 10px; border-left: 1px solid #888; padding-left: 2px; line-height: 14px; }

.arr-side { display: flex; flex-direction: column; align-items: center; padding-bottom: 22px; }
.views { align-self: stretch; height: 41px; padding-left: 7px; background: var(--desk); border-radius: 0 0 0 4px; display: flex; flex-direction: column; gap: 4px; }
.scrollbar { width: 6px; height: 650px; margin-top: 10px; border-radius: 3px; background: #6c6c6c; }
.toggles { margin-top: auto; display: grid; gap: 5px; }
.toggles button { width: 12px; height: 12px; border-radius: 50%; background: #f0b449; color: #6a4510; font-size: 7px; line-height: 12px; font-weight: 700; }
.toggles .black { background: #0c0c0c; color: #aaa; }

/* devices */
.detail { display: flex; gap: 9px; padding: 8px 7px 0; height: 189px; }
.info { width: 183px; flex: none; padding: 4px 3px; background: var(--frame); border-radius: 4px; }
.info div { height: 100%; background: linear-gradient(#a6a6a6 16px, var(--panel) 16px); }
.devices { flex: 1; min-width: 0; display: flex; overflow: hidden; background: var(--frame); border-radius: 4px; padding: 4px 2px 4px 3px; border-right: 2px solid var(--frame); }
.vu { flex: none; width: 10px; height: 37px; margin-top: 69px; background: linear-gradient(90deg, transparent 2px, #111 2px 4px, #777 4px 5px, #111 5px 7px, transparent 7px); }
.device { flex: none; background: var(--panel); border-radius: 4px; overflow: hidden; }
.device > header { height: 16px; background: #a8a8a8; display: flex; align-items: center; gap: 3px; padding: 0 3px; }
.device h2 { font-weight: 700; }
.compressor > header { background: #a8b9c8; }
.power { width: 12px; height: 12px; border-radius: 50%; border: 1px solid #4c4638; background: var(--amber); }
.fold-arrow { display: grid; place-items: center; }
.hand { width: 11px; height: 11px; stroke: #2f64d8; stroke-width: 1.500; }
.hand .body { fill: #2f64d8; stroke: none; }
.tools { margin-left: auto; display: flex; gap: 3px; }
.tools svg { width: 12px; height: 12px; }
.disc { stroke: #222; stroke-width: 1; }
.device div.body { display: flex; height: 157px; padding: 3px 4px 4px; }
.knob { display: flex; flex-direction: column; align-items: center; height: 45px; white-space: nowrap; width: 42px; }
.knob svg { width: 24px; height: 22px; stroke-width: 2; overflow: visible; }
.knob .ring { stroke: #111; } .knob .arc { stroke: var(--cyan); }
.screen { background: var(--screen); border-radius: 3px; color: #9a9a9a; position: relative; }
.screen b { color: var(--cyan); font-weight: 700; }
.screen input[type=checkbox] { width: 7px; height: 7px; border: 1px solid var(--cyan); margin-right: 4px; }
.screen input:checked { background: var(--cyan); }
.screen .o input { border-color: var(--amber); } .screen .o input:checked { background: var(--amber); }
.col { display: flex; flex-direction: column; align-items: center; width: 41px; }
.push-down { width: 40px; margin-top: 2px; }
.compressor { width: 341px; }
.comp-screen { flex: 1; margin: 0 5px; display: flex; flex-direction: column; }
.line-row { height: 18px; display: flex; align-items: center; padding: 0 6px; white-space: nowrap; border-bottom: 1px solid #555; gap: 6px; }
.line-row label { display: flex; align-items: center; } .line-row span + label { margin-left: 10px; } .line-row label + span { margin-left: 6px; }
.graph { flex: 1; position: relative; }
.graph i { position: absolute; left: 0; right: 0; height: 2px; }
.orange-line { top: 15%; background: #a98435; } .cyan-line { top: 62%; background: #6ab9cb; }
.graph span { position: absolute; right: 12px; bottom: 4px; color: var(--amber); }
.foot-row { height: 18px; border-top: 1px solid #555; display: flex; align-items: center; white-space: nowrap; gap: 6px; }
.foot-row button:not(.log) { width: 18px; height: 17px; border-right: 1px solid #555; margin-right: -6px; }
.foot-row button svg { width: 12px; height: 12px; display: block; margin: auto; }
.foot-row .amber { color: var(--amber); margin-right: 0 !important; }
.foot-row .log { background: var(--cyan); color: #111; width: 23px; height: 11px; line-height: 11px; }
.foot-row .tri { color: var(--cyan); }
.col.right { justify-content: space-between; }
.col.right > .btn, .col .stack .btn { width: 40px; }
.col.right > .btn { margin-top: 1px; } .col.right .stack { margin-top: 9px; } .col.right > .knob { margin-top: 12px; }
.stack { display: grid; gap: 3px; }
.btn { white-space: nowrap; }
.btn svg { display: block; width: 100%; height: 10px; }
.autopan { width: 188px; }
.device.autopan div.body { flex-direction: column; }
.pan-screen { height: 46px; }
.pan-screen svg { width: 100%; height: 46px; stroke-width: 1.500; }
.pan-screen .o { stroke: #d9a043; } .pan-screen .c { stroke: var(--cyan); }
.pan-screen span { position: absolute; bottom: 0; left: 4px; color: var(--cyan); } .pan-screen span + span { left: auto; right: 3px; color: var(--amber); }
.four { display: grid; grid-template-columns: 41px 47px 46px 46px; margin-top: 13px; justify-items: center; }
.modes { margin-top: 12px; }
.end { align-content: end; } .wide { width: 39px; } .sm { width: 20px; }
.waves { display: grid; grid-template-columns: 20px 20px; gap: 3px; }
.echo { width: 472px; }
.device.echo div.body { padding: 1px 3px 3px; gap: 4px; }
.tabs { display: flex; gap: 3px; margin-left: 74px; align-self: stretch; padding-top: 3px; }
.tabs button { background: #979797; border-radius: 3px 3px 0 0; padding: 0 6px; height: 13px; }
.tabs .active { background: var(--screen); color: #a9a9a9; }
.delay { display: grid; grid-template-columns: 42px 16px 42px; padding-left: 3px; margin-right: 1px; }
.side-col, .out-a, .out-b { display: flex; flex-direction: column; justify-content: space-between; align-items: center; }
.side-col .stack { width: 42px; }
.val { display: block; width: 100%; height: 12px; border: 1px solid #505050; background: #d6d6d6; line-height: 10px; }
.fill30 { background: linear-gradient(90deg, #7ad5f0 30%, #d6d6d6 30%); }
.mid-col { display: flex; flex-direction: column; align-items: center; gap: 2px; }
.mid-col .btn { width: 12px; flex: none; margin-bottom: 1px; } .mid-col .rule + .btn { width: 17px; }
.mid-col .rule.long + .btn { width: 12px; margin-top: 12px; }
.rule { width: 1px; height: 16px; background: #555; } .rule.long { height: 70px; }
.char-screen { width: 256px; flex: none; display: grid; grid-template-columns: 1fr 1fr; grid-template-rows: 68px 69px 1fr; }
.char-screen section { padding: 2px 4px 0; border-bottom: 1px solid #444; }
.char-screen section:nth-child(odd):not(.last) { border-right: 1px solid #444; }
.char-screen .last { grid-column: 1 / 3; border: 0; }
.char-screen label { display: flex; align-items: center; }
.char-screen dl { display: grid; grid-template-columns: 49px 1fr; row-gap: 2px; padding: 11px 0 0 12px; }
.char-screen .hi { color: var(--cyan); font-weight: 700; } .char-screen .o .hi { color: var(--amber); }
.out-a { width: 50px; align-items: stretch; } .out-a .knob, .out-b .knob { align-self: center; }
.out-b { width: 42px; }
.lfo { width: 180px; }
.device.lfo div.body { flex-direction: column; justify-content: space-between; padding-bottom: 3px; }
.lfo-screen { height: 97px; display: flex; flex-direction: column; justify-content: space-between; }
.lfo-screen b { color: var(--amber); font-weight: 500; }
.lfo-top, .lfo-bottom { display: flex; align-items: center; gap: 4px; padding: 4px; white-space: nowrap; }
.lfo-top button { background: var(--amber); color: #2a1c00; width: 65px; height: 12px; }
.lfo-top svg { width: 12px; height: 12px; stroke: var(--amber); stroke-width: 1; }
.lfo-top .far { margin-left: 12px; }
.lfo-bottom { padding: 3px 4px; gap: 10px; } .lfo-bottom .tri { margin-left: 16px; color: var(--amber); }
.lfo-bottom span + span { margin-left: 6px; }
.curve { width: 144px; height: 52px; stroke: #d9a043; stroke-width: 1.500; }
.lfo-knobs { display: flex; align-items: center; margin-left: -1px; } .lfo-knobs .stack { width: 18px; margin: 0 2px; }
.lfo-knobs .stack .btn { width: 18px; }

/* status bar */
.status { display: flex; padding: 0 7px 8px; height: 34px; }
.status > .round { margin-top: 8px; }
.message { flex: 1; margin: 7px 8px 0 6px; height: 20px; border: 3px solid var(--frame); border-radius: 3px; background: #ed7644; text-align: left; padding-left: 7px; line-height: 14px; color: #1d0d05; }
.field { width: 191px; margin: 7px 6px 0 0; height: 20px; border: 3px solid var(--frame); border-radius: 3px; background: var(--panel); }
.chain { width: 183px; margin-right: 7px; height: 27px; background: var(--frame); border-radius: 0 0 4px 4px; display: flex; align-items: center; gap: 4px; padding: 7px 2px 2px 4px; }
.chain svg { flex: 1; min-width: 0; height: 18px; stroke: none; }
.chain text { fill: #111; font-size: 9px; }
```
FILE: app.js
```js
// Arrangement data: positions are in bars from the left edge, 83 bars visible.
const BARS = 83;
const pct = bars => (bars / BARS * 100).toFixed(3) + '%';
const GREEN = '#7aff54', AQUA = '#8cffe8', SKY = '#6ee8ff', LILAC = '#96a5fa', MINT = '#70fbae', OCHRE = '#c49a3e';

const every = (from, to, step, h) => { const out = []; for (let x = from; x <= to; x += step) out.push([x, 2, h]); return out; };

const tracks = [
  { name: 'Sequences', num: 1, color: AQUA, size: 'mini-row', closed: true, rec: 'midi',
    clips: [[1, 15, 'Node map'], [26, 35.4, 'Background_A'], [36, 45.4, 'Background_B'], [46, 55.4, 'Background_C'], [65, 71, 'Phase Enem', OCHRE]] },
  { name: 'VIDEO', num: 2, color: '#a6ff79', mute: true, mon: 'Off', out: 'Master', rec: 'arm', clips: [[8.8, 20.4, 'Boucle gameplay', null, 'dotted']],
    wave: { spans: [[77, 178]], blobs: [[84, 2, 1], [105, 2, 1], [118, 3, 3], [131, 2, 1], [139, 3, 2.500], [155, 4, 1], [162, 4, 1], [173, 4, 1.500]] } },
  { name: 'Piano', num: 3, color: SKY, mon: 'Auto', out: 'Master', rec: 'midi', clips: [[72, 76, '']] },
  { name: 'Mellotron', num: 4, color: LILAC, mon: 'Auto', out: 'Master', rec: 'midi',
    clips: [[0, 9, 'Mellotron 2'], [14, 18, 'Mellotron'], [22, 25.3, 'Mellotron'], [27, 35, 'Mellotron'], [37, 45.5, 'Mellotron 2'], [47, 55, 'Mellotron']],
    notes: [9, 18, 27, 36, 45, 53, 62, 71].flatMap((x, i) => [[x, 18 + i % 3], [x, 23], [x, 28]]).concat(
      [[130, 11], [135, 7], [139, 13], [143, 15], [134, 17], [144, 9], [149, 18], [201, 11], [205, 10], [209, 15], [212, 17], [215, 16], [211, 22],
       [245, 15], [254, 11], [263, 13], [271, 17], [289, 6], [297, 10], [302, 11], [326, 17], [332, 16], [337, 22], [345, 17], [351, 21], [360, 21], [370, 17], [378, 13], [388, 10],
       [412, 19], [418, 18], [425, 14], [433, 11], [438, 22], [447, 17], [456, 15], [464, 19], [472, 12]]) },
  { name: 'Ukulele', num: 5, color: '#75ffaa', size: 'short', out: 'Master', rec: 'arm', volDot: true,
    clips: [[1, 4.1, 'Ukulélé'], [5, 8, 'Ukulélé'], [8, 9, 'U', null, 'off plain'], [9, 9.8, 'U'], [9.8, 11, 'Uk'], [20.8, 25, 'Ukulélé']].map(c => (c[3] = MINT, c)),
    wave: { spans: [[8, 35], [43, 70], [79, 96], [182, 218]], blobs: [[52, 1, 1], [62, 1, 1]], y: [4, 12], fades: [[60, 70]] } },
  { name: 'Uku2', num: 6, color: '#c8e8ff', size: 'short', out: 'Master', rec: 'arm', vol: '-2.5', fill: 78, volDot: true, selected: true,
    clips: [[1, 4.1, 'Ukulélé'], [4.1, 7.1, 'Ukulélé'], [7.1, 9.500, 'Ukulélé'], [11, 12, 'U'], [21, 25.500, 'Ukulélé2']].map(c => (c[3] = MINT, c)),
    wave: { spans: [[8, 83], [96, 105], [184, 223]], blobs: [], y: [4, 12], fades: [[8, 18], [36, 46], [62, 72]] } },
  { name: 'Uku3', num: 7, color: OCHRE, mon: 'Off', out: 'Master', rec: 'armed', sendDot: true, insert: true },
  { name: 'Musescore', num: 8, color: GREEN, size: 'group-row', out: 'Master', group: true },
  { name: 'STEM Bois', num: 9, color: GREEN, grouped: true, clips: [[0, 83, 'Blue Height B - V2.6-STEM_Bois']],
    wave: { blobs: [[158, 4, 1.300], [446, 35, .8], [360, 35, .7], [413, 3, 1.800], [438, 2, 1.500], [447, 2, 1.500], [463, 2, 1.500], [498, 9, .7], [583, 4, .9], [619, 3, 1.800], [692, 4, .9], [706, 4, .9], [721, 2, 1.800]], bars: [[152, 183, 1.400]] } },
  { name: 'STEM Cuivres', num: 10, color: SKY, grouped: true, clips: [[0, 83, 'Blue Height B - V2.6-STEM_Cuivres']],
    wave: { blobs: [[150, 3, 2.300], [157, 3, 1.500], [183, 5, 2.300], ...every(271, 307, 8.700, .9), ...every(324, 394, 8.700, 1.100), ...every(411, 481, 8.700, 1.100), [526, 3, 1], [586, 2, .9], [594, 2, 1.800], [603, 3, 1.800], [612, 3, 2.200], [620, 3, 2.700], [691, 3, 1], [706, 4, 1], [720, 3, 1.500]], bars: [[150, 158, 1.500], [184, 202, 1.800], [208, 218, 1.400]] } },
  { name: 'STEM Claviers', num: 11, color: LILAC, grouped: true, mute: true, clips: [[0, 83, 'Blue Height B - V2.6-STEMS_Claviers']],
    wave: { blobs: [], bars: [[94, 98, 1.400], [101, 109, 1.400], [142, 148, 1.400], [148, 184, 2], [184, 196, 1.600], [204, 219, 1.400], [236, 306, 2]] } },
  { name: 'STEM Cordes', num: 12, color: '#5c7ce0', grouped: true,
    clips: [[0, 27, 'Blue Height B - V2.6-STEMS_Cordes'], [27.300, 31, 'Blue Height'], [31.200, 83, 'Blue Height B - V2.6-STEMS_Cordes']],
    wave: { blobs: [[113, 2, .8], [131, 2, 1], [149, 5, 1.800], [158, 2, 1.300], [170, 6, 1.500], [182, 4, 3], [192, 2, 2], [200, 2, 2], [209, 2, 1.500], [218, 2, 2], ...every(245, 275, 8.700, .9), ...every(280, 310, 8.700, 1.500), ...every(324, 394, 8.700, 1.600), ...every(411, 481, 8.700, 2.200), [524, 3, .8], [585, 4, 1.300], [594, 2, 1.200], [603, 2, 1.600], [620, 4, 1.600], [649, 3, .8], [676, 4, .9], [691, 2, 1.400], [706, 4, 1.200], [721, 3, 2.300]], bars: [[144, 153, 1.600], [164, 184, 2], [445, 481, 1.800]] } },
  { name: 'STEM Percus', num: 13, color: '#347abb', grouped: true, clips: [[0, 83, 'Blue Height B - V2.6-STEMS_Percus']],
    wave: { blobs: [[149, 3, 2.700], [184, 2, 2.500], [525, 2, 1.300], [620, 3, 2.700]], bars: [[144, 152, 1.600], [182, 187, 1.500], [524, 530, 1.400], [616, 624, 1.500]] } },
  { name: 'Jup_Bass', num: 14, color: OCHRE, size: 'short', out: 'Master', rec: 'midi', vol: '-12.0', fill: 50,
    clips: [[14, 15, 'B'], [15, 19, 'Basse_J'], [19, 21, 'Basse'], [21, 23, 'Basse', null, 'off'], [23, 26.800, 'Basse_', null, 'off'], [27, 31, 'Basse_J'], [31, 35.200, 'Basse_J'], [64, 68, 'Boucle', null, 'off'], [77, 89.500, 'Boucle_basse', null, 'off']],
    notes: Array.from({ length: 24 }, (_, i) => i < 10 ? [133 + i * 5, 2 + i * 3 % 5] : [188 + i * 5, 2 + i * 3 % 5]),
    wave: { spans: [[131, 183], [236, 306]], blobs: [], y: [8] } },
  { name: '15 Jup-8 V4', num: 15, color: '#f8f48c', mon: 'Auto', out: 'Master', rec: 'midi' },
  { name: 'Batt', num: 16, color: '#56bbb0', size: 'cropped', mon: 'Auto', out: 'Master', rec: 'midi', vol: '-12.0', fill: 50,
    clips: [[18, 20, 'Bat', null, 'off'], [20, 21, 'B', null, 'off'], [21, 23, 'Bat', null, 'off'], [27, 35, 'Batt 9'], [35, 37, 'Bat', null, 'off']],
    notes: [[270, 12], [272, 17], [304, 14], [305, 10]], wave: { spans: [[236, 305]], blobs: [], y: [19] } },
  { name: 'A Hybrid Reve', num: 'A', color: '#c4ff4c', size: 'mini-row', closed: true, post: true },
  { name: 'B Delay', num: 'B', color: '#ffa64c', size: 'mini-row', closed: true, post: true },
  { name: 'Master', color: GREEN, size: 'master', main: true }
];

const select = (value, label) => `<label class="sel"><select aria-label="${label}"><option>${value}</option></select></label>`;
const field = (value, fill, label, dot, extra = '') =>
  `<label class="holder ${dot ? 'automated' : ''}"><input class="vol" aria-label="${label}" value="${value}" style="--fill:${fill}%;${extra}"></label>`;

function waveform(t) {
  if (!t.wave && !t.notes) return '';
  let s = '';
  if (t.wave) {
    for (const y of t.wave.y || [8, 25]) {
      for (const [a, b] of t.wave.spans || [[0, 725]]) s += `<rect x="${a}" y="${y - .5}" width="${b - a}" height="1"/>`;
      for (const [a, b, h] of t.wave.bars || []) s += `<rect x="${a}" y="${y - h / 2}" width="${b - a}" height="${h}"/>`;
      for (const [x, w, h] of t.wave.blobs) s += `<ellipse cx="${x}" cy="${y}" rx="${w}" ry="${h}"/>`;
    }
    for (const [x, e] of t.wave.fades || []) s += `<path fill="rgba(0,80,40,.3)" d="M${x} 0h${e - x}L${x + 3} 14z"/>`;
  }
  for (const [x, y] of t.notes || []) s += `<rect x="${x}" y="${y}" width="2" height="1"/>`;
  return `<svg class="wave" viewBox="0 0 725 33" preserveAspectRatio="none">${s}</svg>`;
}

function lane(t) {
  const clips = (t.clips || []).map(([a, b, text, color, cls = '']) =>
    `<div class="clip ${cls}" style="left:${pct(a)};width:${pct(b - a)};--c:${color || t.color}"><span>${text}</span>${cls === 'off' ? '<em>Clip désactivé</em>' : ''}</div>`).join('');
  return `<div class="lane lane-bg ${t.group ? 'summary' : ''}">${clips}${waveform(t)}${t.insert ? '<i class="insert"></i>' : ''}</div>`;
}

function io(t) {
  if (t.main) return select('ii 1/2', 'Sortie cue') + select('ii 1/2', 'Sortie master');
  const mon = t.grouped ? 'Off' : t.mon;
  const out = t.grouped ? 'Musescore' : t.out;
  return (mon ? `<div class="monitor">${['In', 'Auto', 'Off'].map(m => `<button class="${m === mon ? 'on' : ''}">${m}</button>`).join('')}</div>` : '')
    + (out ? select(out, 'Sortie ' + t.name) : '') + '<span class="blank"></span>';
}

function strip(t) {
  const meter = '<i class="meter"></i>';
  if (t.main) return field('0', 82, 'Volume') + `<span class="cue">${field('-4.6', 74, 'Cue', false, '--fill-color:#4262ea')}</span><span></span><button class="pan">C</button>` + meter;
  const rec = t.grouped ? 'arm' : t.rec;
  let s = `<button class="num ${t.mute ? '' : 'on'}">${t.num}</button><button>S</button>`;
  if (t.post) return s + '<button class="on">Post</button>' + meter;
  s += rec ? `<button class="${rec === 'armed' ? 'armed' : ''}" aria-label="Armer"><i class="disc ${rec === 'midi' ? 'midi' : ''}"></i></button>` : '<span></span>';
  if (t.size !== 'mini-row') s += field(t.vol || '0', t.fill || 82, 'Volume', t.volDot) + '<button class="pan">C</button>';
  if (!t.size || t.size === 'cropped') s += `<div class="sends">${field('-inf', 0, 'Send A', t.sendDot)}${field('-inf', 0, 'Send B')}</div>`;
  return s + meter;
}

document.getElementById('tracks').innerHTML = tracks.map(t =>
  `<div class="track ${t.size || 'tall'} ${t.grouped ? 'grouped' : ''} ${t.selected ? 'selected' : ''}" style="--c:${t.color}">${lane(t)}
  <div class="name"><button class="fold ${t.closed ? 'closed' : ''} ${t.group ? 'group-icon' : ''}" aria-label="Plier"></button>${t.name}</div>
  <div class="io">${io(t)}</div><div class="strip ${t.post ? 'return' : ''}">${strip(t)}</div></div>`).join('');

document.getElementById('ruler').innerHTML = Array.from({ length: 11 }, (_, i) =>
  `<span style="left:${pct(i * 8)}"><b>${i * 8 + 1}</b></span>`).join('');
document.getElementById('times').innerHTML = Array.from({ length: 6 }, (_, i) =>
  `<span style="left:${pct(i * 14.480)}">${i}:00</span>`).join('');

const locators = [[1, 'Node Map', 8], [9, 'Transition', 11], [21, 'Inacti...', 5], [26, '', 1], [27, '[Background A]', 10], [37, '[Background B]', 10], [47, '[Background C]', 12]];
document.getElementById('locators').insertAdjacentHTML('beforeend', locators.map(([x, text, w]) =>
  `<span class="locator" style="left:${pct(x)};width:${pct(w)}">${text}</span>`).join(''));
document.getElementById('overlay').innerHTML = locators.map(([x]) => `<i style="left:${pct(x)}"></i>`).join('')
  + `<i class="playhead" style="left:${pct(3.250)}"></i><i class="caret" style="left:${pct(2)}"></i><strong>2/1</strong>`;

// Rotary knobs sweep 300 degrees, centred on twelve o'clock.
const point = (deg, r) => { const a = deg * Math.PI / 180; return `${(12 + r * Math.sin(a)).toFixed(2)} ${(12 - r * Math.cos(a)).toFixed(2)}`; };
const arc = (a, b) => `M${point(a, 10.500)}A10.5 10.5 0 ${b - a > 180 ? 1 : 0} 1 ${point(b, 10.500)}`;
document.querySelectorAll('.knob').forEach(k => {
  const deg = -150 + 300 * Number(k.dataset.v), from = 'bipolar' in k.dataset ? 0 : -150;
  k.innerHTML = `<span>${k.dataset.name}</span><svg viewBox="0 0 24 22"><path class="ring" d="${arc(-150, 150)}"/><path class="arc" d="${arc(from, deg)}"/><path class="ring" d="M12 12L${point(deg, 10)}"/></svg><span>${k.textContent}</span>`;
});
```
